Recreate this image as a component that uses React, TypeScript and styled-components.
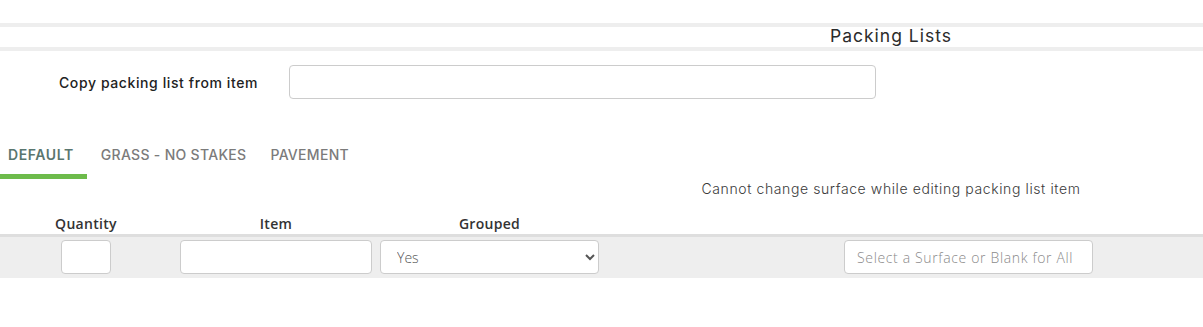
import React from 'react';
import styled, { createGlobalStyle } from 'styled-components';

const GlobalStyle = createGlobalStyle`
  body {
    margin: 0;
    background: #fff;
    font-family: Inter, "Open Sans", sans-serif;
    color: #333;
  }
`;

const Page = styled.div`
  padding-top: 23px;
  width: 1203px;
`;

const TitleBand = styled.div`
  display: grid;
  grid-template-columns: 579px 1fr;
  border-top: 4px solid #eeeeee;
  border-bottom: 4px solid #eeeeee;
  height: 20px;
`;

const Title = styled.h2`
  grid-column: 2;
  margin: 0;
  text-align: center;
  font-size: 17.5px;
  font-weight: 400;
  line-height: 17px;
  color: #2b2b2b;
  letter-spacing: 1px;
`;

const CopyRow = styled.div`
  display: grid;
  grid-template-columns: 289px 587px;
  align-items: center;
  margin-top: 14px;
`;

const CopyLabel = styled.label`
  padding-left: 59px;
  font-size: 14px;
  font-weight: 500;
  color: #222;
  letter-spacing: 0.6px;
`;

const TextInput = styled.input<{ $width: number }>`
  box-sizing: border-box;
  width: ${(p) => p.$width}px;
  height: 34px;
  border: 1px solid #cccccc;
  border-radius: 4px;
  background: #fff;
  padding: 0 12px;
  font-family: "Open Sans", sans-serif;
  font-weight: 300;
  font-size: 14px;
  letter-spacing: 0.65px;
  color: #555;
  outline: none;
  &::placeholder {
    color: #8a8a8a;
  }
`;

const Tabs = styled.div`
  display: flex;
  gap: 6px;
  margin-top: 39px;
`;

const Tab = styled.div<{ $active?: boolean }>`
  padding: 8px ${(p) => (p.$active ? 13 : 10)}px 11px 8px;
  line-height: 17px;
  font-size: 14px;
  font-weight: ${(p) => (p.$active ? 600 : 500)};
  text-transform: uppercase;
  letter-spacing: ${(p) => (p.$active ? 0.6 : 0.3)}px;
  color: ${(p) => (p.$active ? '#5a766f' : '#7b7b7b')};
  border-bottom: 5px solid ${(p) => (p.$active ? '#6dbb4b' : 'transparent')};
`;

const Notice = styled.div`
  display: grid;
  grid-template-columns: 579px 1fr;
  line-height: 20px;
`;

const NoticeText = styled.span`
  grid-column: 2;
  text-align: center;
  font-size: 14px;
  font-weight: 300;
  letter-spacing: 0.6px;
  color: #3a3a3a;
`;

const columns = '172px 208px 219px 245px 249px 1fr';

const HeaderRow = styled.div`
  display: grid;
  grid-template-columns: ${columns};
  margin-top: 15px;
  line-height: 20px;
`;

const HeaderCell = styled.div`
  text-align: center;
  font-family: "Open Sans", sans-serif;
  font-size: 14px;
  font-weight: 600;
  letter-spacing: 0.3px;
  color: #333;
`;

const EditRow = styled.div`
  display: grid;
  grid-template-columns: ${columns};
  align-items: center;
  justify-items: center;
  background: #eeeeee;
  border-top: 3px solid #dedede;
  padding: 3px 0 4px;
`;

const Select = styled.select`
  box-sizing: border-box;
  width: 219px;
  height: 34px;
  border: 1px solid #cccccc;
  border-radius: 4px;
  background: #fff;
  padding: 0 12px;
  font-family: "Open Sans", sans-serif;
  font-weight: 300;
  font-size: 14px;
  color: #555;
  outline: none;
`;

const App: React.FC = () => {
  return (
    <Page>
      <GlobalStyle />
      <TitleBand>
        <Title>Packing Lists</Title>
      </TitleBand>
      <CopyRow>
        <CopyLabel>Copy packing list from item</CopyLabel>
        <TextInput $width={587} type="text" />
      </CopyRow>
      <Tabs>
        <Tab $active>Default</Tab>
        <Tab>Grass - No Stakes</Tab>
        <Tab>Pavement</Tab>
      </Tabs>
      <Notice>
        <NoticeText>Cannot change surface while editing packing list item</NoticeText>
      </Notice>
      <HeaderRow>
        <HeaderCell>Quantity</HeaderCell>
        <HeaderCell>Item</HeaderCell>
        <HeaderCell>Grouped</HeaderCell>
      </HeaderRow>
      <EditRow>
        <TextInput $width={50} type="text" />
        <TextInput $width={192} type="text" />
        <Select defaultValue="Yes">
          <option>Yes</option>
          <option>No</option>
        </Select>
        <div />
        <TextInput $width={249} type="text" placeholder="Select a Surface or Blank for All" />
        <div />
      </EditRow>
    </Page>
  );
};

export default App;
